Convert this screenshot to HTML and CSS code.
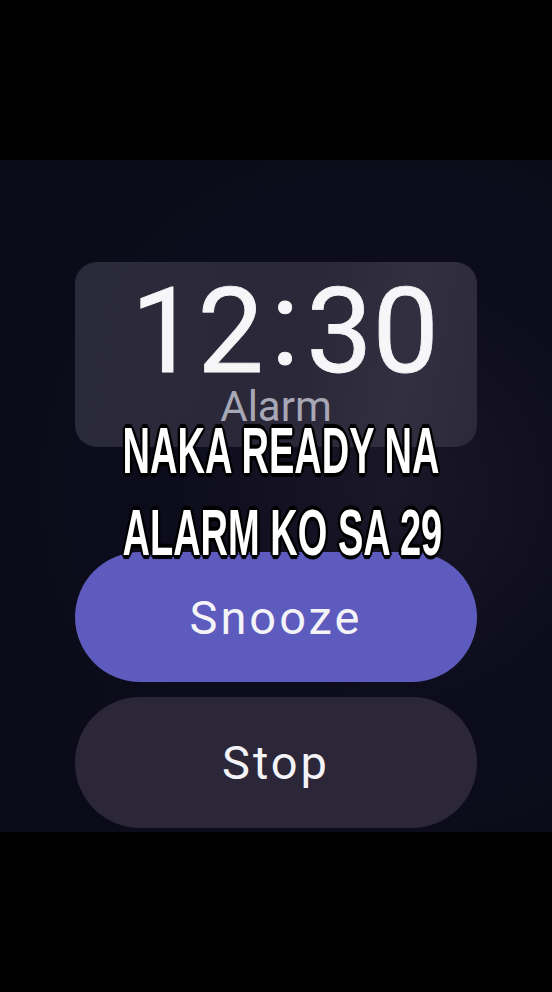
FILE: index.html
```html
<!DOCTYPE html>
<html>
<head>
<meta charset="utf-8">
<link rel="stylesheet" href="styles.css">
</head>
<body>
<div class="band"></div>
<div class="screen">
  <div class="card">
    <div class="time">12<span class="colon">:</span>30</div>
    <div class="label">Alarm</div>
  </div>
  <div class="btn snooze">Snooze</div>
  <div class="btn stop">Stop</div>
  <div class="caption">
    <div class="line">NAKA READY NA</div>
    <div class="line">ALARM KO SA 29</div>
  </div>
</div>
<div class="band bottom"></div>
</body>
</html>
```
FILE: styles.css
```css
html, body {
  margin: 0;
  padding: 0;
  background: #000;
  width: 552px;
  height: 992px;
  overflow: hidden;
}
.band {
  height: 160px;
  background: #000;
}
.screen {
  position: relative;
  height: 672px;
  box-sizing: border-box;
  padding-top: 102px;
  background: radial-gradient(circle at 390px 330px, #1a1828 0, #0d0c1c 220px, #0b0a18 100%);
  display: flex;
  flex-direction: column;
  align-items: center;
}
.card {
  width: 402px;
  height: 185px;
  border-radius: 22px;
  background: linear-gradient(100deg, #2b2a3b 0%, #2a2838 55%, #323040 80%, #2c2a3a 100%);
  box-sizing: border-box;
  padding-top: 11px;
  display: flex;
  flex-direction: column;
  align-items: center;
  font-family: Roboto, "Noto Sans", sans-serif;
}
.time {
  font-size: 118px;
  line-height: 118px;
  color: #f6f6f8;
  font-weight: 400;
  margin-left: 18px;
  -webkit-text-stroke: 0.8px #f6f6f8;
}
.colon {
  display: inline-block;
  margin: 0 7px;
  position: relative;
  top: -8px;
}
.label {
  font-size: 42px;
  line-height: 40px;
  color: #a8a7b6;
  margin-top: -4px;
}
.btn {
  width: 402px;
  height: 130px;
  border-radius: 65px;
  display: flex;
  align-items: center;
  justify-content: center;
  font-family: Roboto, "Noto Sans", sans-serif;
  font-size: 47px;
  letter-spacing: 3px;
  color: #f3f3f8;
}
.snooze {
  margin-top: 105px;
  background: #5d5bbd;
}
.stop {
  margin-top: 15px;
  height: 131px;
  background: #2b2739;
}
.caption {
  position: absolute;
  left: 10px;
  right: 0;
  top: 250px;
  text-align: center;
  font-family: "Liberation Sans", Arial, sans-serif;
  font-weight: 700;
  font-size: 65px;
  line-height: 82px;
  color: #fff;
}
.line {
  transform: scaleX(0.585);
  white-space: nowrap;
  text-shadow:
    3px 0 0 #000, -3px 0 0 #000, 0 3px 0 #000, 0 -3px 0 #000,
    2px 2px 0 #000, -2px 2px 0 #000, 2px -2px 0 #000, -2px -2px 0 #000,
    4px 0 1px #000, -4px 0 1px #000, 0 4px 1px #000, 0 -4px 1px #000;
}
```
